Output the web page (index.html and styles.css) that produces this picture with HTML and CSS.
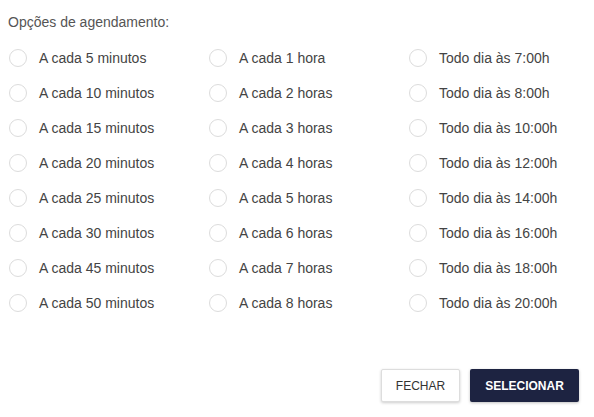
FILE: index.html
```html
<!DOCTYPE html>
<html lang="pt">
<head>
<meta charset="utf-8">
<link rel="stylesheet" href="styles.css">
</head>
<body>
<div class="dialog">
  <div class="title">Opções de agendamento:</div>
  <div class="grid">
    <label class="opt"><span class="radio"></span>A cada 5 minutos</label>
    <label class="opt"><span class="radio"></span>A cada 1 hora</label>
    <label class="opt"><span class="radio"></span>Todo dia às 7:00h</label>
    <label class="opt"><span class="radio"></span>A cada 10 minutos</label>
    <label class="opt"><span class="radio"></span>A cada 2 horas</label>
    <label class="opt"><span class="radio"></span>Todo dia às 8:00h</label>
    <label class="opt"><span class="radio"></span>A cada 15 minutos</label>
    <label class="opt"><span class="radio"></span>A cada 3 horas</label>
    <label class="opt"><span class="radio"></span>Todo dia às 10:00h</label>
    <label class="opt"><span class="radio"></span>A cada 20 minutos</label>
    <label class="opt"><span class="radio"></span>A cada 4 horas</label>
    <label class="opt"><span class="radio"></span>Todo dia às 12:00h</label>
    <label class="opt"><span class="radio"></span>A cada 25 minutos</label>
    <label class="opt"><span class="radio"></span>A cada 5 horas</label>
    <label class="opt"><span class="radio"></span>Todo dia às 14:00h</label>
    <label class="opt"><span class="radio"></span>A cada 30 minutos</label>
    <label class="opt"><span class="radio"></span>A cada 6 horas</label>
    <label class="opt"><span class="radio"></span>Todo dia às 16:00h</label>
    <label class="opt"><span class="radio"></span>A cada 45 minutos</label>
    <label class="opt"><span class="radio"></span>A cada 7 horas</label>
    <label class="opt"><span class="radio"></span>Todo dia às 18:00h</label>
    <label class="opt"><span class="radio"></span>A cada 50 minutos</label>
    <label class="opt"><span class="radio"></span>A cada 8 horas</label>
    <label class="opt"><span class="radio"></span>Todo dia às 20:00h</label>
  </div>
  <div class="actions">
    <button class="btn btn-close">FECHAR</button>
    <button class="btn btn-select">SELECIONAR</button>
  </div>
</div>
</body>
</html>
```
FILE: styles.css
```css
html, body {
  margin: 0;
  padding: 0;
  background: #fff;
}
body {
  font-family: "Liberation Sans", Arial, sans-serif;
  color: #444;
  font-size: 14px;
}
.dialog {
  width: 594px;
  height: 417px;
  box-sizing: border-box;
  padding: 14px 15px 15px 8px;
  display: flex;
  flex-direction: column;
}
.title {
  font-size: 14px;
  line-height: 16px;
  color: #555;
}
.grid {
  margin-top: 19px;
  display: grid;
  grid-template-columns: 200px 200px 170px;
  grid-auto-rows: 35px;
}
.opt {
  display: flex;
  align-items: center;
  height: 18px;
  font-size: 14px;
  color: #444;
  cursor: pointer;
}
.radio {
  width: 16px;
  height: 16px;
  border: 1px solid #dcdcdc;
  border-radius: 50%;
  margin-left: 1px;
  margin-right: 12px;
  flex: none;
}
.actions {
  margin-top: auto;
  display: flex;
  justify-content: flex-end;
  gap: 10px;
}
.btn {
  font-family: "Liberation Sans", Arial, sans-serif;
  font-size: 12px;
  height: 33px;
  border-radius: 2px;
  padding: 0;
  cursor: pointer;
}
.btn-close {
  width: 79px;
  background: #fff;
  color: #333;
  border: 1px solid #ddd;
  box-shadow: 0 1px 3px rgba(0,0,0,0.2);
}
.btn-select {
  width: 109px;
  background: #1d2341;
  color: #fff;
  border: none;
  font-weight: bold;
  box-shadow: 0 1px 3px rgba(0,0,0,0.25);
}
```
